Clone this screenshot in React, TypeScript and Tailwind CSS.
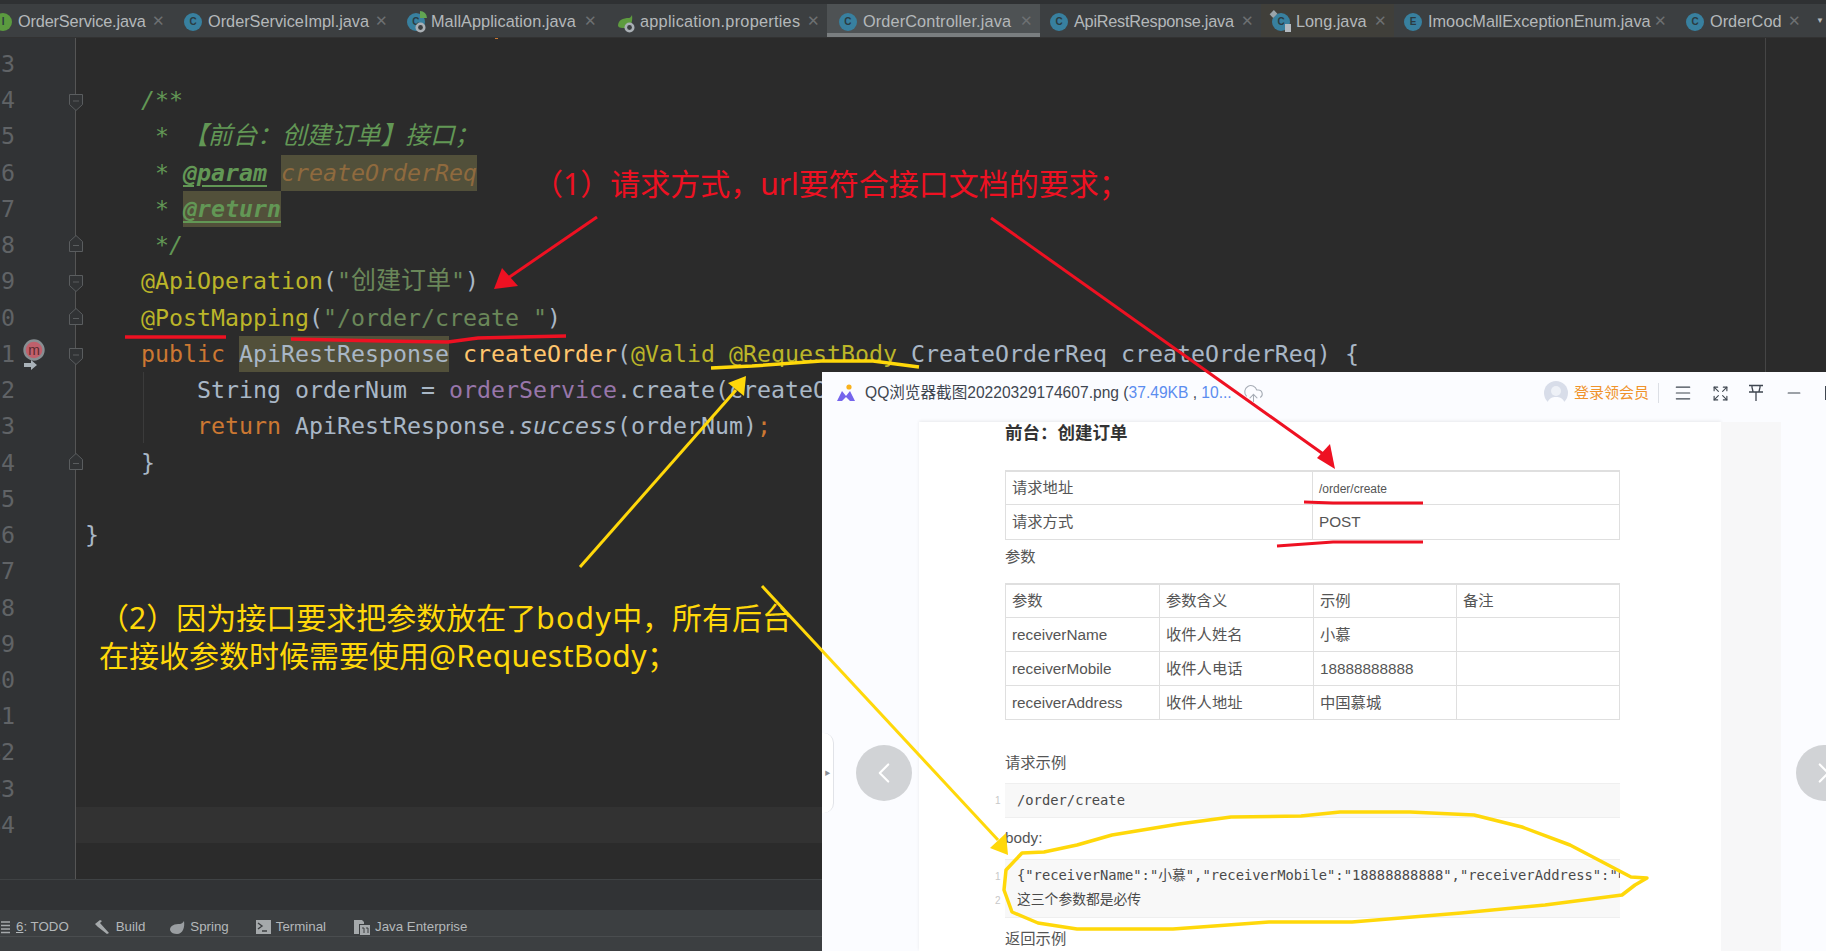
import { ChevronLeft, ChevronRight, CloudUpload, Expand, Menu, Minus } from 'lucide-react';
import type { ReactNode } from 'react';

const MONO = "font-['DejaVu_Sans_Mono','Noto_Sans_CJK_SC',monospace]";

function ClassIcon({ letter = 'C', color = 'bg-[#38809f]' }: { letter?: string; color?: string }) {
  return (
    <div className={`flex h-[18px] w-[18px] shrink-0 items-center justify-center rounded-full ${color} text-[10px] font-bold leading-none text-[#2b3b42]`}>
      {letter}
    </div>
  );
}

function GearBadge() {
  return (
    <svg width="11" height="11" viewBox="0 0 11 11" className="absolute -bottom-[2px] right-[-1px]">
      <circle cx="5.5" cy="5.5" r="5" fill="#aab0b5" />
      <circle cx="5.5" cy="5.5" r="2.4" fill="#3c3f41" />
    </svg>
  );
}

function MallIcon() {
  return (
    <div className="relative h-[18px] w-[18px]">
      <ClassIcon />
      <div className="absolute -right-[2px] -top-[2px] h-[7px] w-[7px] rounded-tr-full bg-[#62a552]" />
      <GearBadge />
    </div>
  );
}

function LeafIcon() {
  return (
    <div className="relative h-[18px] w-[18px]">
      <svg width="18" height="18" viewBox="0 0 18 18">
        <path d="M2 13C2 7 7 5 13 5c1 0 2-1 3-3 1 6-1 13-7 13-3 0-6 0-7-2z" fill="#5e9b3f" />
      </svg>
      <GearBadge />
    </div>
  );
}

function LongIcon() {
  return (
    <div className="relative h-[18px] w-[18px]">
      <ClassIcon />
      <div className="absolute -left-[1px] -top-[2px] h-[6px] w-[5px] rotate-45 bg-[#9aa5ab]" />
      <div className="absolute -bottom-[1px] -right-[1px] h-[8px] w-[6px] bg-[#b4bac0]" />
    </div>
  );
}

type TabProps = { label: string; icon: ReactNode; className: string; active?: boolean; tinted?: boolean };

function Tab({ label, icon, className, active, tinted }: TabProps) {
  return (
    <div className={`relative flex h-full shrink-0 items-center pt-[2px] ${className} ${active ? 'bg-[#4e5254]' : ''} ${tinted ? 'bg-[#403f3a]' : ''}`}>
      {icon}
      <span className="ml-[6px] whitespace-nowrap text-[16.3px] text-[#b4b8ba]">{label}</span>
      <span className="absolute right-[7px] top-[7px] text-[15px] font-light leading-[20px] text-[#6d7072]">✕</span>
      {active && <div className="absolute bottom-0 left-0 right-0 h-[4px] bg-[#7a7e80]" />}
    </div>
  );
}

function TabBar() {
  return (
    <div className="flex h-[34px] shrink-0 items-center overflow-hidden bg-[#3c3f41] border-b border-[#323232]">
      <Tab label="OrderService.java" icon={<ClassIcon letter="I" color="bg-[#5b9a3f]" />} className="ml-[-6px] w-[178px] pl-[0px] tracking-[-0.15px]" />
      <Tab label="OrderServiceImpl.java" icon={<ClassIcon />} className="w-[223px] pl-[12px]" />
      <Tab label="MallApplication.java" icon={<MallIcon />} className="w-[209px] pl-[12px] tracking-[0.05px]" />
      <Tab label="application.properties" icon={<LeafIcon />} className="w-[223px] pl-[12px] tracking-[0.25px]" />
      <Tab label="OrderController.java" icon={<ClassIcon />} className="w-[213px] pl-[12px] tracking-[0.12px]" active />
      <Tab label="ApiRestResponse.java" icon={<ClassIcon />} className="w-[221px] pl-[10px] tracking-[-0.25px]" />
      <Tab label="Long.java" icon={<LongIcon />} className="w-[133px] pl-[11px]" tinted />
      <Tab label="ImoocMallExceptionEnum.java" icon={<ClassIcon letter="E" />} className="w-[280px] pl-[10px]" />
      <Tab label="OrderCod" icon={<ClassIcon />} className="w-[134px] pl-[12px]" />
      <span className="ml-[8px] text-[8px] text-[#b4b8ba]">▼</span>
    </div>
  );
}

const doc = 'italic text-[#629755]';
const tag = 'font-bold italic underline underline-offset-[4px] text-[#629755]';
const ann = 'text-[#bbb529]';
const kw = 'text-[#cc7832]';
const str = 'text-[#6a8759]';

const LINES: ReactNode[] = [
  '',
  <span className={`${doc} pl-[56px]`}>/**</span>,
  <span className={doc}>
    <span className="pl-[56px]"> * </span>
    <span className="text-[24.7px]">【前台：创建订单】接口；</span>
  </span>,
  <span className={doc}>
    <span className="pl-[56px]"> * </span>
    <span className={tag}>@param</span>{' '}
    <span className="inline-block bg-[#52503a] font-normal text-[#8f6a3e]">createOrderReq</span>
  </span>,
  <span className={doc}>
    <span className="pl-[56px]"> * </span>
    <span className={`inline-block bg-[#52503a] ${tag}`}>@return</span>
  </span>,
  <span className={doc}>
    <span className="pl-[56px]"> */</span>
  </span>,
  <span className="pl-[56px]">
    <span className={ann}>@ApiOperation</span>(<span className={str}>"<span className="text-[25px]">创建订单</span>"</span>)
  </span>,
  <span className="pl-[56px]">
    <span className={ann}>@PostMapping</span>(<span className={str}>"/order/create "</span>)
  </span>,
  <span className="pl-[56px]">
    <span className={kw}>public</span> <span className="inline-block bg-[#52503a]">ApiRestResponse</span>{' '}
    <span className="text-[#ffc66d]">createOrder</span>(<span className={ann}>@Valid</span> <span className={ann}>@RequestBody</span> CreateOrderReq createOrderReq) {'{'}
  </span>,
  <span className="pl-[112px]">
    String orderNum = <span className="text-[#9876aa]">orderService</span>.create(createOrderReq)<span className={kw}>;</span>
  </span>,
  <span className="pl-[112px]">
    <span className={kw}>return</span> ApiRestResponse.<span className="italic">success</span>(orderNum)<span className={kw}>;</span>
  </span>,
  <span className="pl-[56px]">{'}'}</span>,
  '',
  <span>{'}'}</span>,
  '',
  '',
  '',
  '',
  '',
  '',
  '',
  '',
];

// fold marker per line: down = opens a block, up = closes one
const FOLDS: Record<number, 'down' | 'up'> = { 1: 'down', 5: 'up', 6: 'down', 7: 'up', 8: 'down', 11: 'up' };

function Fold({ dir }: { dir: 'down' | 'up' }) {
  const d = dir === 'down' ? 'M1.5 1.5h13v10l-6.5 6-6.5-6z' : 'M1.5 17.5h13v-10l-6.5-6-6.5 6z';
  return (
    <svg
      width="16"
      height="19"
      viewBox="0 0 16 19"
      className={`absolute left-[68px] ${dir === 'down' ? 'top-[11px]' : 'top-[7px]'}`}
    >
      <path d={d} fill="#313335" stroke="#5a5d5f" strokeWidth="1" />
      <path d={dir === 'down' ? 'M5 8h6' : 'M5 11.5h6'} stroke="#5a5d5f" strokeWidth="1" />
    </svg>
  );
}

function Breakpoint() {
  return (
    <svg width="26" height="36" viewBox="0 0 26 36" className="absolute left-[21px] top-[3px]">
      <circle cx="13" cy="11" r="9.5" fill="#c0606c" stroke="#888e92" strokeWidth="2.4" />
      <text x="13" y="15.5" textAnchor="middle" fontSize="14" fill="#5a2a2e" fontFamily="Liberation Sans">m</text>
      <path d="M3 24h7v-3l6 5-6 5v-3H3z" fill="#a9b2b9" />
    </svg>
  );
}

function Editor() {
  return (
    <div className={`relative flex flex-1 overflow-hidden bg-[#2b2b2b] ${MONO} text-[23.25px] text-[#a9b7c6]`}>
      <div className="w-[76px] shrink-0 border-r border-[#555555] bg-[#313335] pt-[8px]">
        {LINES.map((_, i) => (
          <div key={i} className="relative h-[36.24px] leading-[36.24px] text-[#606366]">
            <div className="w-[15px] overflow-hidden whitespace-nowrap text-right [direction:rtl]">{23 + i}</div>
            {FOLDS[i] && <Fold dir={FOLDS[i]} />}
            {i === 8 && <Breakpoint />}
          </div>
        ))}
      </div>
      <div className="relative flex-1 whitespace-pre pt-[8px]">
        {LINES.map((line, i) => (
          <div key={i} className={`h-[36.24px] pl-[9px] leading-[36.24px] ${i === 21 ? 'bg-[#323232]' : ''}`}>
            {line}
          </div>
        ))}
        {/* indent guide and right margin */}
        <div className="absolute left-[67px] top-[334px] h-[71px] w-px bg-[#3b3b3b]" />
        <div className="absolute left-[1689px] top-0 h-full w-px bg-[#454545]" />
        <div className="absolute left-[419px] top-0 h-px w-[3px] bg-[#cc7832]" />
      </div>
    </div>
  );
}

function ToolItem({ icon, children, className }: { icon: ReactNode; children: ReactNode; className: string }) {
  return (
    <div className={`flex items-center gap-[5px] ${className}`}>
      {icon}
      <span className="whitespace-nowrap">{children}</span>
    </div>
  );
}

function BottomBar() {
  return (
    <div className="shrink-0 bg-[#3c3f41] font-['Liberation_Sans',sans-serif] text-[13.3px] text-[#b4b8ba]">
      <div className="h-[31px] border-t border-[#3f4244] bg-[#313335]" />
      <div className="flex h-[27px] items-center border-b border-[#4a4d4f] pt-[8px]">
        <ToolItem
          className="ml-0"
          icon={
            <svg width="11" height="14" viewBox="0 0 11 14">
              <path d="M1 2h9M1 5.5h9M1 9h9M1 12.5h9" stroke="#a5a9ab" strokeWidth="1.6" />
            </svg>
          }
        >
          <span className="underline">6</span>: TODO
        </ToolItem>
        <ToolItem
          className="ml-[25px]"
          icon={
            <svg width="17" height="16" viewBox="0 0 17 16">
              <path d="M1 5l5-4 2 1-2 2 9 10-2 1L4 8z" fill="#a5a9ab" />
            </svg>
          }
        >
          Build
        </ToolItem>
        <ToolItem
          className="ml-[24px]"
          icon={
            <svg width="16" height="15" viewBox="0 0 16 15">
              <path d="M1 10C1 5 6 4 11 4c1 0 3-1 4-3 1 6-1 13-7 13-3 0-6-1-7-4z" fill="#9a9ea1" />
            </svg>
          }
        >
          Spring
        </ToolItem>
        <ToolItem
          className="ml-[27px]"
          icon={
            <svg width="15" height="14" viewBox="0 0 15 14">
              <rect width="15" height="14" fill="#a5a9ab" />
              <path d="M2 3l4 3-4 3M6 11h5" stroke="#3c3f41" strokeWidth="1.4" fill="none" />
            </svg>
          }
        >
          Terminal
        </ToolItem>
        <ToolItem
          className="ml-[28px]"
          icon={
            <svg width="16" height="16" viewBox="0 0 16 16">
              <path d="M0 1h8l2 2v2H5v10H0z" fill="#a5a9ab" />
              <rect x="6" y="6" width="10" height="10" fill="#a5a9ab" />
              <path d="M8 9h2v5M12 9h2v5" stroke="#3c3f41" strokeWidth="1" fill="none" />
            </svg>
          }
        >
          Java Enterprise
        </ToolItem>
      </div>
      <div className="h-[14px]" />
    </div>
  );
}

function WindowHeader() {
  return (
    <div className="flex h-[50px] shrink-0 items-center pb-[8px] pl-[14px] text-[15.6px] text-[#3f4650]">
      <svg width="20" height="20" viewBox="0 0 20 20" className="shrink-0">
        <path d="M1 18L6 8l4 5 4-5 5 10h-5l-4-4-4 4z" fill="#7565ec" />
        <circle cx="13" cy="4" r="2.6" fill="#f9b21d" />
      </svg>
      <span className="ml-[9px] whitespace-nowrap">
        QQ浏览器截图20220329174607.png (<span className="text-[#5b8def]">37.49KB</span> , <span className="text-[#5b8def]">10...</span>
      </span>
      <CloudUpload size={21} strokeWidth={1.2} className="ml-[11px] text-[#a7adb6]" />
      <div className="ml-auto mr-[-5px] flex items-center">
        <svg width="24" height="24" viewBox="0 0 24 24" className="shrink-0">
          <circle cx="12" cy="12" r="12" fill="#d8dde9" />
          <circle cx="12" cy="10" r="5" fill="#eef1f7" />
          <path d="M3 24c1-7 5-8 9-8s8 1 9 8z" fill="#fbfcff" />
        </svg>
        <span className="ml-[6px] whitespace-nowrap text-[15px] text-[#f0932b]">登录领会员</span>
        <div className="ml-[9px] h-[20px] w-px bg-[#dcdfe5]" />
        <Menu size={20} strokeWidth={1.4} className="ml-[14px]" />
        <Expand size={17} strokeWidth={1.6} className="ml-[18.5px]" />
        <svg width="18" height="18" viewBox="0 0 18 18" fill="none" stroke="#3f4650" strokeWidth="1.3" className="ml-[18.5px]">
          <path d="M2 1.5h14M5 1.5v2l1 4M13 1.5v2l-1 4M2 8h14M9 8v9" />
        </svg>
        <Minus size={20} strokeWidth={1.4} className="ml-[19px]" />
        <div className="ml-[21px] h-[14px] w-[6px] border-y border-l border-[#3f4650]" />
      </div>
    </div>
  );
}

const TD = 'border border-[#dfdfdf] px-[6px] pt-[2px] align-middle';

function DocTables() {
  return (
    <>
      <table className="mt-[26px] h-[68px] w-[615px] table-fixed border-collapse border-t-2 border-[#dfdfdf]">
        <colgroup>
          <col className="w-[307px]" />
          <col />
        </colgroup>
        <tbody>
          <tr className="h-[33px]">
            <td className={TD}>请求地址</td>
            <td className={`${TD} text-[12px]`}>/order/create</td>
          </tr>
          <tr className="h-[35px]">
            <td className={TD}>请求方式</td>
            <td className={TD}>POST</td>
          </tr>
        </tbody>
      </table>
      <p className="mt-[5px] h-[24px] leading-[24px]">参数</p>
      <table className="mt-[14px] h-[135px] w-[615px] table-fixed border-collapse border-t-2 border-[#dfdfdf]">
        <colgroup>
          <col className="w-[154px]" />
          <col className="w-[154px]" />
          <col className="w-[143px]" />
          <col />
        </colgroup>
        <tbody>
          {[
            ['参数', '参数含义', '示例', '备注'],
            ['receiverName', '收件人姓名', '小慕', ''],
            ['receiverMobile', '收件人电话', '18888888888', ''],
            ['receiverAddress', '收件人地址', '中国慕城', ''],
          ].map((row) => (
            <tr key={row[0]} className="h-[34px]">
              {row.map((cell, i) => (
                <td key={i} className={TD}>
                  {cell}
                </td>
              ))}
            </tr>
          ))}
        </tbody>
      </table>
    </>
  );
}

function CodeBlock({ lines, className }: { lines: string[]; className: string }) {
  return (
    <div className={`relative overflow-visible ${className}`}>
      <div className="h-full overflow-hidden border-y border-[#efefef] bg-[#f8f8f8] pl-[12px] font-['DejaVu_Sans_Mono','Noto_Sans_CJK_SC',monospace] text-[13.8px] text-[#4a4a4a]">
        {lines.map((l, i) => (
          <div key={i} className="relative h-[24px] whitespace-pre leading-[24px]">
            {l}
          </div>
        ))}
      </div>
      <div className="absolute left-[-10px] top-0 flex h-full flex-col justify-center gap-[6px] text-[10px] leading-[18px] text-[#c8c8c8]">
        {lines.map((_, i) => (
          <span key={i}>{i + 1}</span>
        ))}
      </div>
    </div>
  );
}

function ImageViewer() {
  return (
    <div className="absolute bottom-0 left-[822px] top-[372px] flex w-[1004px] flex-col bg-[#fbfcff] font-['Liberation_Sans','Noto_Sans_CJK_SC',sans-serif]">
      <WindowHeader />
      <div className="flex min-h-0 flex-1">
        <div className="w-[97px] shrink-0" />
        <div className="w-[802px] shrink-0 overflow-hidden bg-white pl-[86px] text-[15.3px] text-[#555555] shadow-[0_-1px_3px_rgba(0,0,0,0.08)]">
          <h2 className="h-[22px] text-[17.5px] font-bold leading-[22px] text-[#333333]">前台：创建订单</h2>
          <DocTables />
          <p className="mt-[31px] h-[24px] leading-[24px]">请求示例</p>
          <CodeBlock className="mt-[8px] h-[35px] w-[615px] [&>div:first-child]:pt-[4px]" lines={['/order/create']} />
          <p className="mt-[8px] h-[24px] leading-[24px]">body:</p>
          <CodeBlock
            className="mt-[9px] h-[59px] w-[615px] [&>div:first-child]:pt-[3px]"
            lines={['{"receiverName":"小慕","receiverMobile":"18888888888","receiverAddress":"中国慕城"}', '这三个参数都是必传']}
          />
          <p className="mt-[9px] h-[24px] leading-[24px]">返回示例</p>
        </div>
        <div className="w-[60px] shrink-0 bg-[#f7f7f8]" />
      </div>
      {/* side handle and prev / next buttons float over the page */}
      <div className="absolute left-0 top-[361px] flex h-[80px] w-[12px] items-center justify-center rounded-r-[10px] border-r border-[#e1e3e8] bg-white text-[#8b8f96]">
        <span className="text-[6px]">▶</span>
      </div>
      <div className="absolute left-[34px] top-[373px] flex h-[56px] w-[56px] items-center justify-center rounded-full bg-[#d1d3d6] text-white">
        <ChevronLeft size={34} strokeWidth={1.5} />
      </div>
      <div className="absolute left-[974px] top-[373px] flex h-[56px] w-[56px] items-center justify-center rounded-full bg-[#d1d3d6] text-white">
        <ChevronRight size={34} strokeWidth={1.5} />
      </div>
    </div>
  );
}

const LOOP =
  'M1022 853 L1044 852 L1077 845 L1112 835 L1179 824 L1231 817 L1301 816 L1340 812 L1410 812 L1474 815 L1522 827 L1570 845 L1631 877 L1647 878 L1635 885 L1622 895 L1545 905 L1461 913 L1352 922 L1269 922 L1173 929 L1077 929 L1038 923 L1012 912 L1004 890 L1006 870 Z';

function Annotations() {
  return (
    <>
      <svg width="1826" height="951" viewBox="0 0 1826 951" className="pointer-events-none absolute left-0 top-0">
        <g stroke="#ee1122" strokeWidth="3" fill="none">
          <path d="M597 217L508 278" />
          <path d="M991 218L1326 456" />
          <path d="M125 337L226 337" strokeWidth="3.5" />
          <path d="M291 339L383 341L448 342L478 338L566 336" strokeWidth="3.5" />
          <path d="M1304 502L1333 503L1423 503" strokeWidth="3" />
          <path d="M1277 546L1333 542L1423 542" strokeWidth="3" />
        </g>
        <path d="M494 289L502 268L518 286z" fill="#ee1122" />
        <path d="M1335 469L1317 458L1330 444z" fill="#ee1122" />
        <g stroke="#ffd80a" strokeWidth="3" fill="none">
          <path d="M580 567L736 390" />
          <path d="M711 368L752 366L821 361L873 361L919 367" strokeWidth="3.5" />
          <path d="M762 586L998 840" />
          <path d={LOOP} strokeWidth="3.5" strokeLinejoin="round" />
        </g>
        <path d="M746 376L728 383L744 396z" fill="#ffd80a" />
        <path d="M1008 855L990 848L1006 833z" fill="#ffd80a" />
      </svg>
      <div className="absolute left-[533px] top-[164px] whitespace-nowrap font-['Noto_Sans','Noto_Sans_CJK_SC',sans-serif] text-[30px] leading-[40px] text-[#ee1122]">
        （1）请求方式，url要符合接口文档的要求；
      </div>
      <div className="absolute left-[99px] top-[599px] whitespace-pre font-['Noto_Sans','Noto_Sans_CJK_SC',sans-serif] text-[30px] leading-[38px] text-[#ffd80a]">
        <div>
          （2）因为接口要求把参数放在了<span className="tracking-[1.4px]">body</span>中，所有后台
        </div>
        <div>
          在接收参数时候需要使用<span className="tracking-[0.4px]">@RequestBody</span>；
        </div>
      </div>
    </>
  );
}

export default function App() {
  return (
    <div className="relative flex h-[951px] w-[1826px] flex-col overflow-hidden bg-[#2b2b2b] font-['Liberation_Sans','Noto_Sans_CJK_SC',sans-serif]">
      <div className="h-[4px] shrink-0 bg-[#2f3133]" />
      <TabBar />
      <Editor />
      <BottomBar />
      <ImageViewer />
      <Annotations />
    </div>
  );
}
